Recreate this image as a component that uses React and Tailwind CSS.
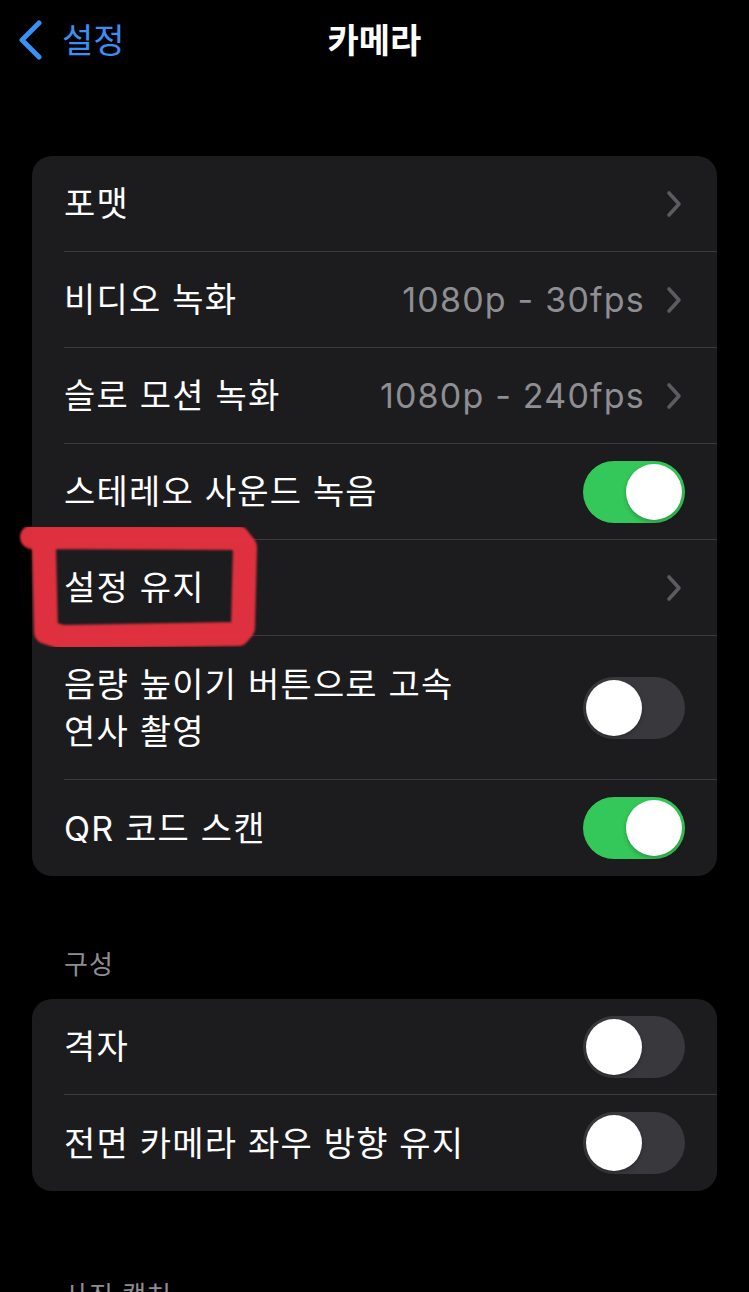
import React from "react";

const font = { fontFamily: '"Inter", "Noto Sans CJK KR", "Noto Sans", sans-serif' };

function Chevron() {
  return (
    <svg width="18" height="28" viewBox="0 0 18 28" className="shrink-0">
      <path d="M4 3 L14 14 L4 25" fill="none" stroke="#5b5b60" strokeWidth="3.6" strokeLinecap="round" strokeLinejoin="round" />
    </svg>
  );
}

function Toggle({ on }) {
  return (
    <div
      className={
        "w-[102px] h-[62px] rounded-full p-[3px] flex shrink-0 " +
        (on ? "bg-[#34c759] justify-end" : "bg-[#39393d] justify-start")
      }
    >
      <div className="w-[56px] h-[56px] rounded-full bg-white shadow-[0_2px_4px_rgba(0,0,0,0.25)]" />
    </div>
  );
}

function Row({ label, value, chevron, toggle, tall, last }) {
  return (
    <div className={"pl-[32px] " + (tall ? "h-[144px]" : "h-[96px]")}>
      <div
        className={
          "h-full flex items-center justify-between pr-[32px] " +
          (last ? "" : "border-b border-[#3a3a3c]")
        }
      >
        <div className="text-[34px] leading-[47px] text-white tracking-[1.2px]">{label}</div>
        <div className="flex items-center gap-[20px]">
          {value && <span className="text-[34px] text-[#8e8e93] tracking-[1.2px]">{value}</span>}
          {chevron && <div className="mr-[2px]"><Chevron /></div>}
          {toggle !== undefined && <Toggle on={toggle} />}
        </div>
      </div>
    </div>
  );
}

export default function App() {
  return (
    <div className="w-[749px] h-[1292px] bg-black overflow-hidden relative" style={font}>
      {/* nav bar */}
      <div className="grid grid-cols-3 h-[80px] items-center">
        <div className="flex items-center pl-[18px] gap-[18px] text-[#3b8ff6]">
          <svg width="26" height="40" viewBox="0 0 26 40">
            <path d="M21 3 L4 20 L21 37" fill="none" stroke="#3b8ff6" strokeWidth="5" strokeLinecap="round" strokeLinejoin="round" />
          </svg>
          <span className="text-[34px]">설정</span>
        </div>
        <div className="text-center text-[34px] font-semibold text-white">카메라</div>
        <div />
      </div>

      <div className="px-[32px] mt-[76px]">
        <div className="bg-[#1c1c1e] rounded-[20px] overflow-hidden">
          <Row label="포맷" chevron />
          <Row label="비디오 녹화" value="1080p - 30fps" chevron />
          <Row label="슬로 모션 녹화" value="1080p - 240fps" chevron />
          <Row label="스테레오 사운드 녹음" toggle={true} />
          <Row label="설정 유지" chevron />
          <Row
            label={<>음량 높이기 버튼으로 고속<br />연사 촬영</>}
            toggle={false}
            tall
          />
          <Row label="QR 코드 스캔" toggle={true} last />
        </div>

        <div className="mt-[72px] pl-[32px] text-[26px] leading-[34px] text-[#8d8d93] tracking-[1px]">구성</div>
        <div className="mt-[17px] bg-[#1c1c1e] rounded-[20px] overflow-hidden">
          <Row label="격자" toggle={false} />
          <Row label="전면 카메라 좌우 방향 유지" toggle={false} last />
        </div>

        <div className="mt-[88px] pl-[32px] text-[26px] leading-[34px] text-[#8d8d93] tracking-[1px]">사진 캡처</div>
      </div>

      {/* red marker annotation */}
      <svg className="absolute left-0 top-0 pointer-events-none" width="749" height="1292">
        <defs>
          <filter id="soft" x="-10%" y="-10%" width="120%" height="120%">
            <feGaussianBlur stdDeviation="1.2" />
          </filter>
        </defs>
        <path
          d="M32 537 L238 538 L245 547 L243 628 L238 634 L62 637 L46 632 L44 548 L40 539"
          fill="none"
          stroke="#e9323f"
          strokeWidth="24"
          strokeLinecap="round"
          strokeLinejoin="round"
          opacity="0.95"
          filter="url(#soft)"
        />
      </svg>
    </div>
  );
}
